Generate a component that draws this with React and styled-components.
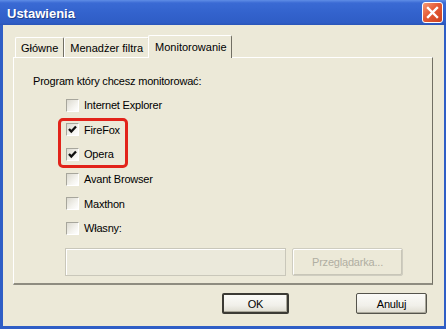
import React from 'react'
import styled, { createGlobalStyle, css } from 'styled-components'

const programs = [
    { name: 'Internet Explorer', checked: false },
    { name: 'FireFox', checked: true },
    { name: 'Opera', checked: true },
    { name: 'Avant Browser', checked: false },
    { name: 'Maxthon', checked: false },
    { name: 'Własny:', checked: false },
]

const tabs = ['Główne', 'Menadżer filtra', 'Monitorowanie']

function App() {
    return (
        <>
            <GlobalStyle />
            <Frame>
                <TitleBar>
                    <Title>Ustawienia</Title>
                    <CloseButton>
                        <svg width="13" height="13" viewBox="0 0 13 13">
                            <path d="M2 2 L11 11 M11 2 L2 11" stroke="#fff" strokeWidth="2.4" strokeLinecap="square" />
                        </svg>
                    </CloseButton>
                </TitleBar>
                <Body>
                    <Tabs>
                        {tabs.map((t, i) => (
                            <Tab key={t} $active={i === 2}>{t}</Tab>
                        ))}
                    </Tabs>
                    <Panel>
                        <Heading>Program który chcesz monitorować:</Heading>
                        <List>
                            {programs.map((p) => (
                                <Row key={p.name}>
                                    <Box>
                                        {p.checked && (
                                            <svg width="9" height="9" viewBox="0 0 9 9">
                                                <path d="M1 4 L3.3 6.6 L8 1.5" fill="none" stroke="#111" strokeWidth="2.3" />
                                            </svg>
                                        )}
                                    </Box>
                                    <Label>{p.name}</Label>
                                </Row>
                            ))}
                            <Highlight />
                        </List>
                        <PathRow>
                            <PathInput />
                            <Button $disabled $w={111} $h={28}>Przeglądarka...</Button>
                        </PathRow>
                    </Panel>
                    <Footer>
                        <Button $default $w={67} $h={21}>OK</Button>
                        <Button $w={71} $h={21}>Anuluj</Button>
                    </Footer>
                </Body>
            </Frame>
        </>
    )
}

export default App

const GlobalStyle = createGlobalStyle`
    html, body {
        margin:0;
        padding:0;
        background:#ece9d8;
    }
    body {
        font-family:"Liberation Sans", Arial, sans-serif;
        font-size:11px;
        color:#000;
    }
`

const Frame = styled.div`
    width:446px;
    height:329px;
    box-sizing:border-box;
    display:flex;
    flex-direction:column;
    background:#2f5ec6;
    padding:0 2px 3px 3px;
`

const TitleBar = styled.div`
    height:25px;
    margin:0 -2px 0 -3px;
    padding:0 3px 0 7px;
    display:flex;
    align-items:center;
    justify-content:space-between;
    background:linear-gradient(#5f8de6 0%, #3a6ad4 12%, #3363cd 50%, #2f5dc6 90%, #2a55b8 100%);
`

const Title = styled.div`
    color:#fff;
    font-weight:bold;
    font-size:13px;
    text-shadow:1px 1px 0 #1e3f8c;
    padding-top:1px;
`

const CloseButton = styled.div`
    width:21px;
    height:21px;
    box-sizing:border-box;
    border:1px solid #fff;
    border-radius:3px;
    background:linear-gradient(135deg, #f59a78 0%, #e55a34 45%, #cc4220 100%);
    display:flex;
    align-items:center;
    justify-content:center;
`

const Body = styled.div`
    flex:1;
    background:#ece9d8;
    display:flex;
    flex-direction:column;
    padding:10px 11px 0 10px;
`

const Tabs = styled.div`
    display:flex;
    align-items:flex-end;
    height:22px;
    padding-left:2px;
    position:relative;
    z-index:1;
`

const Tab = styled.div`
    height:20px;
    box-sizing:border-box;
    padding:0 5px 0 5px;
    display:flex;
    align-items:center;
    border-top:1px solid #fff;
    border-left:1px solid #fff;
    border-right:1px solid #716f64;
    border-radius:2px 2px 0 0;
    background:#ece9d8;
    font-size:11px;
    ${(p) => p.$active && css`
        height:23px;
        margin:0 0 -1px -1px;
        padding:0 4px 1px 6px;
    `}
`

const Panel = styled.div`
    height:228px;
    box-sizing:border-box;
    border-top:1px solid #fff;
    border-left:1px solid #fff;
    border-right:1px solid #716f64;
    border-bottom:2px solid #8e8c80;
    padding:16px 0 0 19px;
    display:flex;
    flex-direction:column;
`

const Heading = styled.div`
    line-height:14px;
    letter-spacing:-0.2px;
`

const List = styled.div`
    position:relative;
    margin:5px 0 0 33px;
    display:flex;
    flex-direction:column;
`

const Row = styled.div`
    height:24.6px;
    display:flex;
    align-items:center;
    gap:5px;
`

const Box = styled.div`
    width:13px;
    height:13px;
    box-sizing:border-box;
    border:1px solid;
    border-color:#a7a69c #fff #fff #a7a69c;
    background:linear-gradient(135deg, #dcdad0 0%, #f4f3ee 60%, #fff 100%);
    display:flex;
    align-items:center;
    justify-content:center;
`

const Label = styled.span`
    letter-spacing:-0.2px;
`

const Highlight = styled.div`
    position:absolute;
    left:-8px;
    top:25px;
    width:70px;
    height:50px;
    box-sizing:border-box;
    border:3px solid #e2231a;
    border-radius:5px;
    pointer-events:none;
`

const PathRow = styled.div`
    display:flex;
    gap:6px;
    margin:7px 0 0 32px;
`

const PathInput = styled.div`
    width:221px;
    height:28px;
    box-sizing:border-box;
    border:1px solid #c9c7ba;
    box-shadow:inset 1px 1px 0 #fff;
    background:#ebe9db;
`

const Button = styled.div`
    width:${(p) => p.$w}px;
    height:${(p) => p.$h}px;
    box-sizing:border-box;
    display:flex;
    align-items:center;
    justify-content:center;
    border:1px solid #55544c;
    border-radius:2px;
    background:linear-gradient(#fbfbf8 0%, #f1f0ea 60%, #dedcd0 100%);
    box-shadow:inset -1px -1px 0 #a9a79a;
    letter-spacing:-0.2px;
    ${(p) => p.$default && css`
        border:2px solid #3c3b35;
    `}
    ${(p) => p.$disabled && css`
        color:#b0aea2;
        border-color:#cfcdc0;
        background:#ece9d8;
        box-shadow:inset 1px 1px 0 #fff, inset -1px -1px 0 #c8c6b8;
    `}
`

const Footer = styled.div`
    display:flex;
    justify-content:flex-end;
    gap:67px;
    margin-top:8px;
    padding-right:6px;
`
